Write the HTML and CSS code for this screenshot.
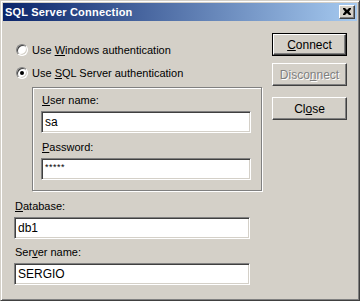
FILE: index.html
```html
<!DOCTYPE html>
<html lang="en">
<head>
  <meta charset="UTF-8" />
  <title>SQL Server Connection</title>
  <link rel="stylesheet" href="styles.css">
</head>
<body>
  <div class="window">
    <div class="titlebar">
      <span class="title">SQL Server Connection</span>
      <span class="close-btn">
        <svg width="16" height="14" viewBox="0 0 16 14">
          <path d="M4 3h2l2 2 2-2h2v1l-2 2.5 2 2.5v1h-2l-2-2-2 2H4V9l2-2.5L4 4z" fill="#000"/>
        </svg>
      </span>
    </div>

    <div class="dialog">
      <div class="main">
        <div class="radio-row">
          <span class="radio"></span>
          <span>Use <u>W</u>indows authentication</span>
        </div>
        <div class="radio-row">
          <span class="radio checked"></span>
          <span>Use <u>S</u>QL Server authentication</span>
        </div>

        <div class="group">
          <div class="label"><u>U</u>ser name:</div>
          <div class="field">sa</div>
          <div class="label pass-label"><u>P</u>assword:</div>
          <div class="field pwd">*****</div>
        </div>

        <div class="label db-label"><u>D</u>atabase:</div>
        <div class="field wide">db1</div>
        <div class="label server-label">Ser<u>v</u>er name:</div>
        <div class="field wide">SERGIO</div>
      </div>

      <div class="buttons">
        <div class="btn default"><span><u>C</u>onnect</span></div>
        <div class="btn disabled">Disco<u>n</u>nect</div>
        <div class="btn close">Cl<u>o</u>se</div>
      </div>
    </div>
  </div>
</body>
</html>
```

FILE: styles.css
```css
* {
  margin: 0; padding: 0;
  box-sizing: border-box;
}

body {
  background: #d4d0c8;
  font-family: 'Liberation Sans', Arial, sans-serif;
  font-size: 11px;
  color: #000;
  width: 360px;
  height: 301px;
  overflow: hidden;
}

.window {
  width: 360px;
  height: 301px;
  border: 1px solid;
  border-color: #d4d0c8 #404040 #404040 #d4d0c8;
  box-shadow: inset 1px 1px #fff, inset -1px -1px #808080;
  padding: 2px;
  display: flex;
  flex-direction: column;
  background: #d4d0c8;
}

.titlebar {
  height: 18px;
  display: flex;
  align-items: center;
  justify-content: space-between;
  padding: 0 2px 0 2px;
  background: linear-gradient(to right, #0a246a, #a6caf0);
}

.title {
  color: #fff;
  font-weight: bold;
  font-size: 11px;
  letter-spacing: 0.2px;
}

.close-btn {
  width: 16px;
  height: 14px;
  display: block;
  background: #d4d0c8;
  border: 1px solid;
  border-color: #fff #404040 #404040 #fff;
  box-shadow: inset -1px -1px #808080;
  position: relative;
}

.close-btn svg {
  position: absolute;
  top: -1px;
  left: -1px;
}

.dialog {
  flex: 1;
  display: flex;
}

.main {
  flex: 1;
  padding: 17px 0 0 11px;
}

.radio-row {
  height: 23px;
  display: flex;
  align-items: center;
  gap: 4px;
  padding-left: 2px;
}

.radio {
  width: 12px;
  height: 12px;
  border-radius: 50%;
  border: 1px solid;
  border-color: #808080 #fff #fff #808080;
  box-shadow: inset 1px 1px #404040, inset -1px -1px #d4d0c8;
  background: #fff;
  position: relative;
}

.radio.checked::after {
  content: "";
  position: absolute;
  top: 3px;
  left: 3px;
  width: 4px;
  height: 4px;
  border-radius: 50%;
  background: #000;
}

.group {
  margin: 3px 0 0 18px;
  width: 230px;
  border: 1px solid #808080;
  box-shadow: inset 1px 1px #fff, 1px 1px #fff;
  padding: 6px 0 10px 8px;
}

.label {
  height: 13px;
  line-height: 13px;
  padding-left: 1px;
  margin-bottom: 4px;
}

.pass-label {
  margin-top: 8px;
}

.db-label {
  margin-top: 9px;
}

.server-label {
  margin-top: 7px;
}

.field {
  width: 210px;
  height: 22px;
  background: #fff;
  border: 1px solid;
  border-color: #808080 #fff #fff #808080;
  box-shadow: inset 1px 1px #404040, inset -1px -1px #d4d0c8;
  padding: 3px 0 0 3px;
  font-size: 12px;
  line-height: 15px;
}

.field.wide {
  width: 236px;
}

.field.pwd {
  font-size: 9px;
  line-height: 10px;
  letter-spacing: 0.5px;
}

.buttons {
  width: 85px;
  padding-top: 12px;
  display: flex;
  flex-direction: column;
  gap: 7px;
}

.btn {
  width: 75px;
  height: 23px;
  border: 1px solid;
  border-color: #fff #404040 #404040 #fff;
  box-shadow: inset -1px -1px #808080;
  display: flex;
  align-items: center;
  justify-content: center;
  font-size: 12px;
}

.btn.default {
  border: 1px solid #000;
  box-shadow: none;
  padding: 0;
}

.btn.default span {
  width: 73px;
  height: 21px;
  border: 1px solid;
  border-color: #fff #404040 #404040 #fff;
  box-shadow: inset -1px -1px #808080;
  display: flex;
  align-items: center;
  justify-content: center;
}

.btn.disabled {
  color: #808080;
  text-shadow: 1px 1px #fff;
}

.btn.close {
  margin-top: 4px;
}
```
